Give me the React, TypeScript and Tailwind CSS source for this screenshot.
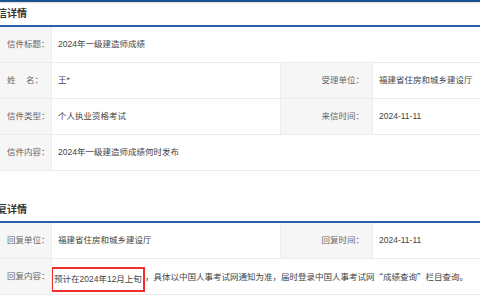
const font = { fontFamily: '"Liberation Sans", "Noto Sans CJK SC", sans-serif' };
const cjk = { fontFamily: '"Noto Sans CJK SC", sans-serif' };

function Label({ children, right }: { children: React.ReactNode; right?: boolean }) {
  return (
    <div
      className={`flex items-center bg-[#f6f6f6] text-[#666] ${
        right ? 'justify-end pr-[8px] border-l border-r border-[#ececec]' : 'pl-[7px] border-r border-[#ececec]'
      }`}
    >
      {children}
    </div>
  );
}

function Value({ children }: { children: React.ReactNode }) {
  return <div className="flex items-center pl-[6px] text-[#444] whitespace-nowrap overflow-hidden">{children}</div>;
}

function Row({ children }: { children: React.ReactNode }) {
  return (
    <div className="grid grid-cols-[52px_228px_93px_1fr] h-[36px] border-b border-[#ececec]">{children}</div>
  );
}

function WideRow({ children }: { children: React.ReactNode }) {
  return <div className="grid grid-cols-[52px_1fr] h-[36px] border-b border-[#ececec]">{children}</div>;
}

function Title({ text }: { text: string }) {
  return (
    <div className="h-[25px] flex items-center border-b-2 border-[#2a5ea8]">
      <span className="-ml-[13px] text-[10px] font-bold text-[#333] leading-none">{text}</span>
    </div>
  );
}

export default function App() {
  return (
    <div className="w-[480px] h-[300px] overflow-hidden bg-white text-[8.5px]" style={font}>
      <div className="h-[2px] bg-[#1d4f93] shadow-[0_1px_2px_rgba(0,0,0,0.15)]" />
      <Title text="来信详情" />
      <Row>
        <Label>信件标题：</Label>
        <div className="col-span-3 flex items-center pl-[6px] text-[#444]">2024年一级建造师成绩</div>
      </Row>
      <Row>
        <Label>
          <span className="w-[36px] flex justify-between">
            <span>姓</span>
            <span>名：</span>
          </span>
        </Label>
        <Value>王*</Value>
        <Label right>受理单位：</Label>
        <Value>福建省住房和城乡建设厅</Value>
      </Row>
      <Row>
        <Label>信件类型：</Label>
        <Value>个人执业资格考试</Value>
        <Label right>来信时间：</Label>
        <Value>2024-11-11</Value>
      </Row>
      <WideRow>
        <Label>信件内容：</Label>
        <Value>2024年一级建造师成绩何时发布</Value>
      </WideRow>

      <div className="h-[27px]" />
      <Title text="回复详情" />
      <Row>
        <Label>回复单位：</Label>
        <Value>福建省住房和城乡建设厅</Value>
        <Label right>回复时间：</Label>
        <Value>2024-11-11</Value>
      </Row>
      <WideRow>
        <Label>回复内容：</Label>
        <div className="flex items-center text-[#444] whitespace-nowrap overflow-hidden">
          <span className="-ml-px mt-[6px] border-2 border-[#f0302a] px-px py-[4px] leading-[13px]">预计在2024年12月上旬</span>
          <span>
            ，具体以中国人事考试网通知为准，届时登录中国人事考试网<span style={cjk}>“</span>成绩查询
            <span style={cjk}>”</span>栏目查询。
          </span>
        </div>
      </WideRow>
    </div>
  );
}
